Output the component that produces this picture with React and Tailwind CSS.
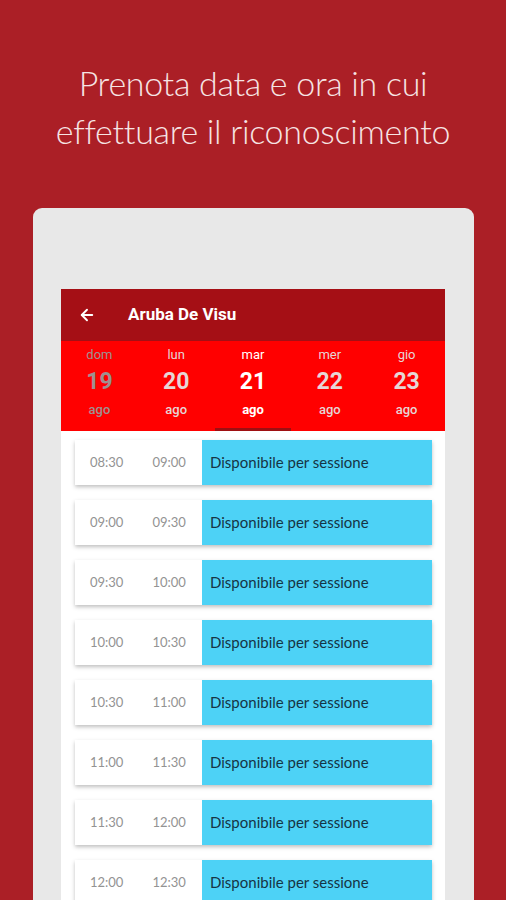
import { ArrowLeft } from "lucide-react";

const days = [
  { name: "dom", num: "19", tone: "text-[#9e9090]" },
  { name: "lun", num: "20", tone: "text-[#e6d6d6]" },
  { name: "mar", num: "21", tone: "text-white", active: true },
  { name: "mer", num: "22", tone: "text-[#e6d6d6]" },
  { name: "gio", num: "23", tone: "text-[#e6d6d6]" },
];

const slots = [
  ["08:30", "09:00"],
  ["09:00", "09:30"],
  ["09:30", "10:00"],
  ["10:00", "10:30"],
  ["10:30", "11:00"],
  ["11:00", "11:30"],
  ["11:30", "12:00"],
  ["12:00", "12:30"],
];

export default function App() {
  return (
    <div className="w-[506px] h-[900px] overflow-hidden bg-[#ab1f26] flex flex-col items-center">
      {/* headline */}
      <h1
        className="mt-[59px] text-center text-[34px] leading-[48px] font-light tracking-[-0.3px] text-[#f6e4e4]"
        style={{ fontFamily: "Lato, 'Open Sans', sans-serif" }}
      >
        Prenota data e ora in cui
        <br />
        effettuare il riconoscimento
      </h1>

      {/* device frame */}
      <div className="mt-[53px] ml-[1px] w-[441px] flex-1 bg-[#e8e8e8] rounded-t-[9px] pt-[81px] pl-[28px] pr-[29px]">
        <div className="w-[384px] h-full bg-white flex flex-col">
          {/* app bar */}
          <div
            className="h-[52px] bg-[#a50f15] flex items-center px-[17px] text-white"
            style={{ fontFamily: "Roboto, sans-serif" }}
          >
            <ArrowLeft size={18} strokeWidth={2.5} />
            <span className="ml-[32px] text-[17px] font-bold">Aruba De Visu</span>
          </div>

          {/* date tabs */}
          <div
            className="h-[90px] bg-[#ff0000] grid grid-cols-5"
            style={{ fontFamily: "Roboto, sans-serif" }}
          >
            {days.map((d) => (
              <div key={d.num} className={`relative flex flex-col items-center pt-[6px] ${d.tone}`}>
                <span className="text-[13px] leading-[16px]">{d.name}</span>
                <span className="mt-[6px] text-[23px] leading-[26px] font-bold">{d.num}</span>
                <span className={`mt-[7px] text-[13px] leading-[16px] ${d.active ? "font-bold" : "font-medium"}`}>ago</span>
                {d.active && (
                  <div className="absolute bottom-0 left-0 right-0 h-[3px] bg-[#9e0f12]" />
                )}
              </div>
            ))}
          </div>

          {/* slot list */}
          <div
            className="flex flex-col gap-[15px] pt-[9px] pl-[14px] pr-[13px]"
            style={{ fontFamily: "Lato, 'Open Sans', sans-serif" }}
          >
            {slots.map(([from, to]) => (
              <div
                key={from}
                className="h-[45px] flex shadow-[0_2px_4px_rgba(0,0,0,0.25)] shrink-0"
              >
                <div className="w-[127px] bg-white flex items-center text-[13px] text-[#939393]">
                  <span className="ml-[15px]">{from}</span>
                  <span className="ml-[29px]">{to}</span>
                </div>
                <div className="flex-1 bg-[#4dd2f6] flex items-center pl-[8px] text-[15px] text-[#163444]">
                  Disponibile per sessione
                </div>
              </div>
            ))}
          </div>
        </div>
      </div>
    </div>
  );
}
